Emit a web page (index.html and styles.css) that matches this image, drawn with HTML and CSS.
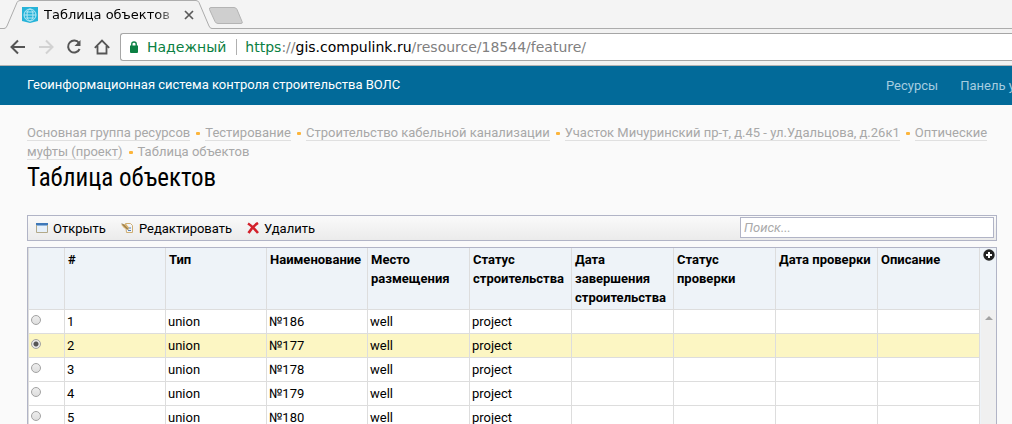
FILE: index.html
```html
<!DOCTYPE html>
<html lang="ru">
<head>
<meta charset="utf-8">
<title>Таблица объектов</title>
<link rel="stylesheet" href="styles.css">
</head>
<body>
<div class="browser">
  <div class="tabstrip">
    <svg class="tab-shape" width="244" height="29" viewBox="0 0 244 29" aria-hidden="true">
      <path d="M0 28.500H4Q6 28.500 7 26L17 2.500Q18 .5 20 .5H196Q198 .5 199 2.500L209 26Q210 28.500 212 28.500H244V29H0Z" fill="#f2f2f2"/>
      <path d="M0 28.500H4Q6 28.500 7 26L17 2.500Q18 .5 20 .5H196Q198 .5 199 2.500L209 26Q210 28.500 212 28.500H244" fill="none" stroke="#acacac"/>
      <path d="M211 7.500H234Q236 7.500 237 9.500L242 21.500Q243 23.500 241 23.500H218Q216 23.500 215 21.500L209.500 9.500Q209 7.500 211 7.500Z" fill="#cfcfcf" stroke="#b4b4b4"/>
    </svg>
    <div class="tab">
      <svg width="16" height="16" viewBox="0 0 16 16" aria-hidden="true">
        <path d="M0 0H16V14L8 16L0 14Z" fill="#26b3d8"/>
        <g fill="none" stroke="#b5e8f5"><circle cx="8" cy="8" r="6"/><ellipse cx="8" cy="8" rx="3" ry="6"/><path d="M2 8H14M3.500 5H12.500M3.500 11H12.500"/></g>
      </svg>
      <span class="tab-title">Таблица объектов</span>
      <button class="plain" aria-label="Закрыть вкладку"><svg width="10" height="10" viewBox="0 0 10 10"><path d="M1 1L9 9M9 1L1 9" stroke="#5a5a5a" stroke-width="1.700"/></svg></button>
    </div>
  </div>
  <div class="toolbar">
    <div class="nav-buttons">
      <button class="plain" aria-label="Назад"><svg width="16" height="16" viewBox="0 0 16 16"><path d="M15 8H2M8 1.500L1.500 8L8 14.500" fill="none" stroke="#555" stroke-width="2"/></svg></button>
      <button class="plain" aria-label="Вперёд"><svg width="16" height="16" viewBox="0 0 16 16"><path d="M1 8H14M8 1.500L14.500 8L8 14.500" fill="none" stroke="#d2d2d2" stroke-width="2"/></svg></button>
      <button class="plain" aria-label="Обновить"><svg width="16" height="16" viewBox="0 0 16 16"><path d="M13 4A6 6 0 1 0 13.600 10" fill="none" stroke="#555" stroke-width="2"/><path d="M14.500 1V7H8.500Z" fill="#555"/></svg></button>
      <button class="plain" aria-label="Домой"><svg width="16" height="16" viewBox="0 0 16 16"><path d="M.8 8.800L8 1.600L15.200 8.800M3.500 7V14.500H12.500V7" fill="none" stroke="#555" stroke-width="1.800"/></svg></button>
    </div>
    <div class="address">
      <svg width="8" height="12" viewBox="0 0 8 12" aria-hidden="true"><path d="M0 4.500H8V11Q8 12 7 12H1Q0 12 0 11Z" fill="#0b8043"/><path d="M1.800 5V3Q1.800 1 4 1T6.200 3V5" fill="none" stroke="#0b8043" stroke-width="1.400"/></svg>
      <span class="secure">Надежный</span>
      <span class="url"><span class="scheme">https</span>://<span class="host">gis.compulink.ru</span>/resource/18544/feature/</span>
    </div>
  </div>
</div>
<header class="site-header">
  <span class="brand">Геоинформационная система контроля строительства ВОЛС</span>
  <nav class="site-nav"><a href="#">Ресурсы</a><a href="#">Панель у</a></nav>
</header>
<main class="content">
  <nav class="crumbs"><a href="#">Основная группа ресурсов</a><i class="dot"></i><a href="#">Тестирование</a><i class="dot"></i><a href="#">Строительство кабельной канализации</a><i class="dot"></i><a href="#">Участок Мичуринский пр-т, д.45 - ул.Удальцова, д.26к1</a><i class="dot"></i><a href="#">Оптические муфты (проект)</a><i class="dot"></i><span>Таблица объектов</span></nav>
  <h1>Таблица объектов</h1>
  <div class="actions">
    <button class="action"><svg width="12" height="12" viewBox="0 0 12 12" aria-hidden="true"><path d="M.5 1.500H11.500V10.500H.5Z" fill="#e6f0fa" stroke="#b3a989"/><path d="M0 1H12V3H0Z" fill="#3f78b8"/><path d="M1 3H11V4H1Z" fill="#8db4dc"/></svg>Открыть</button>
    <button class="action"><svg width="13" height="12" viewBox="0 0 13 12" aria-hidden="true"><path d="M4.500 1.500H9.500L11.500 3.500V10.500H5.500Z" fill="#f3f5f8" stroke="#cfae72"/><path d="M6.500 6H10M7 8.500H10" stroke="#5580b5"/><path d="M0 2.500L5 2L8 5.500L7 8L3 6Z" fill="#d7b06c"/><path d="M1 1.500L7 7.500" stroke="#715f3a"/></svg>Редактировать</button>
    <button class="action"><svg width="12" height="12" viewBox="0 0 12 12" aria-hidden="true"><path d="M1 1.500Q5 4 11 11M11 1Q6 4 1.500 11" fill="none" stroke="#d3212b" stroke-width="2.600"/></svg>Удалить</button>
    <input class="search" type="text" placeholder="Поиск..." aria-label="Поиск">
  </div>
  <div class="grid">
    <table>
      <colgroup><col class="pick"><col class="short" span="3"><col span="6"></colgroup>
      <thead><tr><th></th><th>#</th><th>Тип</th><th>Наименование</th><th>Место размещения</th><th>Статус строительства</th><th>Дата завершения строительства</th><th>Статус проверки</th><th>Дата проверки</th><th>Описание</th></tr></thead>
      <tbody>
        <tr><td><input type="radio" name="row" aria-label="1"></td><td>1</td><td>union</td><td>№186</td><td>well</td><td>project</td><td></td><td></td><td></td><td></td></tr>
        <tr class="selected"><td><input type="radio" name="row" aria-label="2" checked></td><td>2</td><td>union</td><td>№177</td><td>well</td><td>project</td><td></td><td></td><td></td><td></td></tr>
        <tr><td><input type="radio" name="row" aria-label="3"></td><td>3</td><td>union</td><td>№178</td><td>well</td><td>project</td><td></td><td></td><td></td><td></td></tr>
        <tr><td><input type="radio" name="row" aria-label="4"></td><td>4</td><td>union</td><td>№179</td><td>well</td><td>project</td><td></td><td></td><td></td><td></td></tr>
        <tr><td><input type="radio" name="row" aria-label="5"></td><td>5</td><td>union</td><td>№180</td><td>well</td><td>project</td><td></td><td></td><td></td><td></td></tr>
      </tbody>
    </table>
    <div class="side">
      <button class="plain columns" aria-label="Столбцы"><svg width="12" height="12" viewBox="0 0 12 12"><circle cx="6" cy="6" r="5.700" fill="#222"/><path d="M6 3V9M3 6H9" stroke="#fff" stroke-width="2"/></svg></button>
      <div class="scrollbar"><svg width="8" height="4" viewBox="0 0 8 4" aria-hidden="true"><path d="M0 4L4 0L8 4Z" fill="#a3a3a3"/></svg></div>
    </div>
  </div>
</main>
</body>
</html>
```
FILE: styles.css
```css
* { box-sizing: border-box; }
body {
  margin: 0;
  height: 100vh;
  overflow: hidden;
  background: #fafafa;
  color: #000;
  font: 13px/19px Roboto, sans-serif;
}
button, input { font: inherit; color: inherit; }
svg { display: block; flex: none; }
.plain { display: block; padding: 0; border: 0; background: none; }

.browser { font-family: "DejaVu Sans", sans-serif; background: #f2f2f2; border-bottom: 1px solid #b3b3b3; }
.tabstrip { position: relative; height: 29px; background: #f4f4f4; border-bottom: 1px solid #acacac; }
.tab-shape { position: absolute; left: 0; top: 0; }
.tab { position: relative; display: flex; align-items: center; width: 194px; height: 29px; padding-left: 22px; }
.tab-title {
  flex: 1;
  margin: 0 8px 0 6px;
  overflow: hidden;
  white-space: nowrap;
  -webkit-mask-image: linear-gradient(to right, #000 112px, transparent 136px);
  mask-image: linear-gradient(to right, #000 112px, transparent 136px);
}
.toolbar { display: flex; align-items: center; height: 36px; }
.nav-buttons { display: flex; gap: 12px; padding: 0 10px; }
.address {
  flex: 1;
  display: flex;
  align-items: center;
  height: 28px;
  padding-left: 9px;
  background: #fff;
  border: 1px solid #a6a6a6;
  border-right: 0;
  border-radius: 3px 0 0 3px;
  font-size: 14px;
  white-space: nowrap;
}
.secure { margin-left: 9px; padding-right: 10px; border-right: 1px solid #b0b0b0; color: #0b8043; line-height: 16px; }
.url { margin-left: 8px; color: #808080; }
.scheme { color: #0b8043; }
.host { color: #000; }

.site-header { display: flex; justify-content: space-between; height: 39px; padding-left: 27px; background: #026a99; color: #fff; line-height: 38px; white-space: nowrap; }
.site-nav { display: flex; flex: none; gap: 22px; width: 126px; overflow: hidden; }
.site-nav a { flex: none; color: #a6cde0; text-decoration: none; line-height: 40px; }

.content { padding: 18px 15px 0 27px; }
.crumbs { color: #a8a8a8; }
.crumbs a { color: inherit; text-decoration: none; border-bottom: 1px solid #e0e0e0; }
.dot { display: inline-block; width: 4px; height: 3px; margin: 0 5px 0 6px; border-radius: 1px; background: #fcb53b; vertical-align: 2px; }
h1 { margin: 0 0 20px; font: 25px/34px "Roboto Condensed", Roboto, sans-serif; }

.actions { display: flex; align-items: center; height: 26px; padding: 0 2px 0 8px; border: 1px solid #b1b4c6; background: linear-gradient(#fafafa, #ebebeb); }
.action { display: flex; align-items: center; gap: 5px; margin-right: 15px; padding: 0; border: 0; background: none; }
.search { width: 254px; height: 21px; margin: 0 0 2px auto; padding: 0 3px; border: 1px solid #b1b4c6; border-radius: 0; background: #fff; }
.search::placeholder { color: #aaa; font-style: italic; opacity: 1; }

.grid { display: flex; margin-top: 6px; border: 1px solid #b1b4c6; background: #fff; }
table { flex: 1; width: 100%; table-layout: fixed; border-collapse: separate; border-spacing: 0; }
.pick { width: 37px; }
.short { width: 101px; }
th, td { padding: 2px; border-right: 1px solid #ddd; border-bottom: 1px solid #ddd; text-align: left; vertical-align: top; }
th:first-child, td:first-child { border-left: 1px solid #ddd; }
th { padding: 2px 3px; background: #eef3f8; font-weight: 700; }
.selected td { background: #fcf6c3; }
input[type="radio"] {
  appearance: none;
  display: block;
  width: 10px;
  height: 10px;
  margin: 3px 0 0;
  border: 1px solid #a2a2a2;
  border-radius: 50%;
  background: linear-gradient(#ededed, #dedede);
}
input[type="radio"]:checked { background: radial-gradient(circle, #555 2px, #e8e8e8 3px); }
.side { display: flex; flex-direction: column; width: 16px; background: #eef3f8; }
.plain.columns { display: flex; align-items: flex-start; height: 62px; padding: 1px 0 0 3px; }
.scrollbar { flex: 1; padding: 6px 0 0 4px; margin-left: 1px; background: #f0f0f0; }
```
